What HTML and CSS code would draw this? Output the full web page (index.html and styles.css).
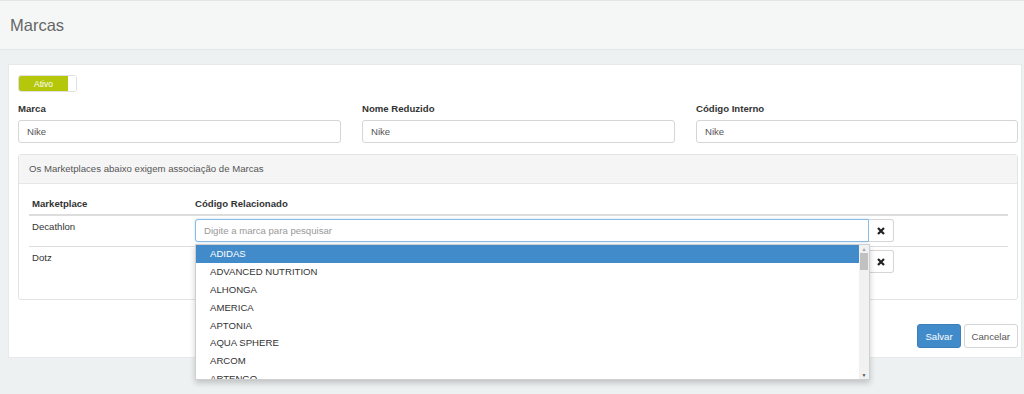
FILE: index.html
```html
<!DOCTYPE html>
<html lang="pt-BR">
<head>
    <meta charset="UTF-8" />
    <title>Marcas</title>
    <link rel="stylesheet" href="styles.css">
</head>
<body>
    <!-- HEADER -->
    <div class="page-header">
        <h1>Marcas</h1>
    </div>

    <!-- FORM CARD -->
    <div class="card">
        <div class="toggle">
            <span class="toggle-on">Ativo</span>
            <span class="toggle-off"></span>
        </div>

        <div class="fields">
            <div class="field">
                <label>Marca</label>
                <input class="input" type="text" value="Nike">
            </div>
            <div class="field">
                <label>Nome Reduzido</label>
                <input class="input" type="text" value="Nike">
            </div>
            <div class="field">
                <label>Código Interno</label>
                <input class="input" type="text" value="Nike">
            </div>
        </div>

        <div class="panel">
            <div class="panel-heading">Os Marketplaces abaixo exigem associação de Marcas</div>
            <div class="panel-body">
                <div class="row row-head">
                    <div class="cell-name">Marketplace</div>
                    <div class="cell-code">Código Relacionado</div>
                </div>
                <div class="row">
                    <div class="cell-name">Decathlon</div>
                    <div class="cell-code">
                        <div class="input-group">
                            <input class="input focus" type="text" placeholder="Digite a marca para pesquisar">
                            <button class="btn-remove"><svg width="8" height="8" viewBox="0 0 8 8"><path d="M1 1L7 7M7 1L1 7" stroke="#222" stroke-width="2.2"/></svg></button>
                        </div>
                        <!-- dropdown open over the rows below -->
                        <div class="dropdown">
                            <ul class="dropdown-list">
                                <li class="active">ADIDAS</li>
                                <li>ADVANCED NUTRITION</li>
                                <li>ALHONGA</li>
                                <li>AMERICA</li>
                                <li>APTONIA</li>
                                <li>AQUA SPHERE</li>
                                <li>ARCOM</li>
                                <li>ARTENGO</li>
                            </ul>
                            <div class="scrollbar">
                                <span class="arrow">▲</span>
                                <span class="thumb"></span>
                                <span class="arrow down">▼</span>
                            </div>
                        </div>
                    </div>
                </div>
                <div class="row last">
                    <div class="cell-name">Dotz</div>
                    <div class="cell-code">
                        <div class="input-group">
                            <input class="input" type="text" value="">
                            <button class="btn-remove"><svg width="8" height="8" viewBox="0 0 8 8"><path d="M1 1L7 7M7 1L1 7" stroke="#222" stroke-width="2.2"/></svg></button>
                        </div>
                    </div>
                </div>
            </div>
        </div>

        <div class="actions">
            <button class="btn save">Salvar</button>
            <button class="btn cancel">Cancelar</button>
        </div>
    </div>
</body>
</html>
```

FILE: styles.css
```css
body {
    margin: 0;
    padding: 0;
    background: #eef1f2;
    font-family: "Liberation Sans", Arial, sans-serif;
    font-size: 9.6px;
    color: #333;
    height: 394px;
    overflow: hidden;
}

/* Header */
.page-header {
    height: 48px;
    background: #f5f7f7;
    border-top: 1px solid #e2e5e6;
    border-bottom: 1px solid #e4e7e8;
    display: flex;
    align-items: center;
    padding-left: 10px;
}
.page-header h1 {
    margin: 0;
    font-size: 16.5px;
    font-weight: normal;
    color: #666;
}

/* Card */
.card {
    margin: 14px 2px 0 8px;
    background: #fff;
    border: 1px solid #e6e9ea;
    padding: 10px 3px 9px 9px;
}

.toggle {
    display: flex;
    width: 57px;
    height: 15px;
    border: 1px solid #e0e0e0;
    border-radius: 3px;
    overflow: hidden;
}
.toggle-on {
    width: 49px;
    background: #b5c70a;
    color: #fff;
    font-size: 8.5px;
    display: flex;
    align-items: center;
    justify-content: center;
}
.toggle-off {
    flex: 1;
    background: #fff;
}

.fields {
    display: grid;
    grid-template-columns: 323px 313px 1fr;
    column-gap: 21px;
    margin-top: 10px;
}
.field label {
    display: block;
    font-weight: bold;
    line-height: 14px;
    margin-bottom: 4px;
}
.input {
    box-sizing: border-box;
    width: 100%;
    height: 23px;
    border: 1px solid #d5d5d5;
    border-radius: 3px;
    padding: 0 8px;
    font-family: "Liberation Sans", Arial, sans-serif;
    font-size: 9.6px;
    color: #555;
    outline: none;
}
.input::placeholder {
    color: #999;
}
.input.focus {
    border-color: #8bbce6;
    box-shadow: 0 0 2px rgba(102, 175, 233, 0.5);
}

/* Panel */
.panel {
    margin-top: 11px;
    border: 1px solid #e3e3e3;
    border-radius: 3px;
}
.panel-heading {
    background: #f5f5f5;
    border-bottom: 1px solid #e6e6e6;
    height: 28px;
    line-height: 28px;
    padding-left: 10px;
    color: #555;
}
.panel-body {
    padding: 9px 9px 22px 10px;
}
.row {
    display: flex;
    border-top: 1px solid #dddddd;
    height: 30px;
}
.row-head {
    border-top: none;
    border-bottom: 2px solid #dddddd;
    height: 21px;
    align-items: center;
    font-weight: bold;
}
.row-head + .row {
    border-top: none;
}
.cell-name {
    width: 160px;
    padding: 0 3px;
}
.row:not(.row-head) .cell-name {
    padding-top: 5px;
}
.cell-code {
    position: relative;
    padding-top: 3px;
}
.row-head .cell-code {
    padding-top: 0;
}
.input-group {
    display: flex;
    width: 699px;
}
.input-group .input {
    flex: 1;
    border-radius: 3px 0 0 3px;
}
.btn-remove {
    width: 25px;
    height: 23px;
    border: 1px solid #d5d5d5;
    border-left: none;
    background: #fff;
    border-radius: 0 3px 3px 0;
    display: flex;
    align-items: center;
    justify-content: center;
    padding: 0;
}

/* Autocomplete dropdown, open over the rows */
.dropdown {
    position: absolute;
    top: 28px;
    left: 0;
    width: 673px;
    height: 134px;
    background: #fff;
    border: 1px solid #cfcfcf;
    box-shadow: 0 3px 6px rgba(0, 0, 0, 0.2);
    display: flex;
    overflow: hidden;
    z-index: 5;
}
.dropdown-list {
    list-style: none;
    margin: 0;
    padding: 0;
    flex: 1;
}
.dropdown-list li {
    height: 17.9px;
    line-height: 18px;
    padding-left: 14px;
    color: #333;
}
.dropdown-list li.active {
    background: #428bca;
    color: #fff;
}
.scrollbar {
    width: 10px;
    background: #f1f1f1;
    display: flex;
    flex-direction: column;
    align-items: center;
}
.scrollbar .arrow {
    font-size: 5px;
    color: #a3a3a3;
    height: 8px;
    line-height: 8px;
}
.scrollbar .arrow.down {
    margin-top: auto;
    color: #505050;
}
.scrollbar .thumb {
    width: 8px;
    height: 17px;
    background: #c1c1c1;
}

/* Actions */
.actions {
    display: flex;
    justify-content: flex-end;
    gap: 3px;
    margin-top: 24px;
}
.btn {
    height: 24px;
    padding: 0 7px;
    font-family: "Liberation Sans", Arial, sans-serif;
    font-size: 9.6px;
    border-radius: 3px;
    cursor: pointer;
}
.save {
    background: #428bca;
    border: 1px solid #3b7fbb;
    color: #fff;
}
.cancel {
    background: #fff;
    border: 1px solid #d5d5d5;
    color: #555;
}
```
